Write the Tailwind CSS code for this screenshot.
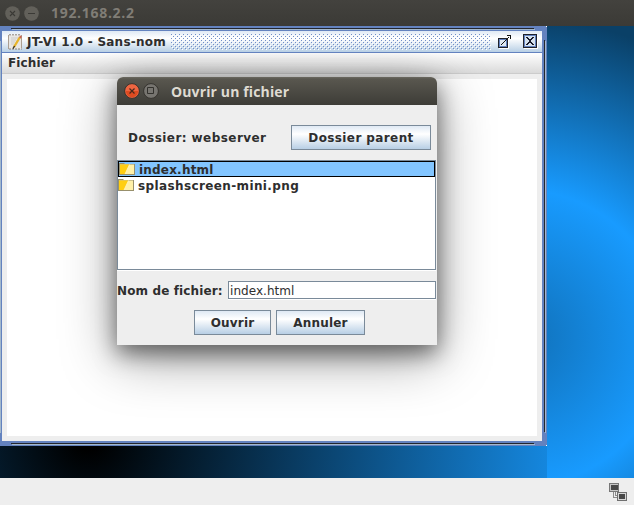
<!DOCTYPE html>
<html lang="fr">
<head>
<meta charset="utf-8">
<title>192.168.2.2</title>
<script src="https://cdn.jsdelivr.net/npm/@tailwindcss/browser@4"></script>
</head>
<body class="w-[634px] h-[505px] overflow-hidden flex flex-col bg-[#eeeeee] font-['DejaVu_Sans',sans-serif] text-[13px] leading-4 text-[#2e2e2e]">
<header class="h-[26px] shrink-0 flex items-center pl-[5px] bg-linear-to-b from-[#43423e] to-[#3b3a36]">
  <svg class="mr-1" width="15" height="15" viewBox="0 0 15 15"><circle cx="7.5" cy="7.5" r="7.3" fill="#62605a"/><path d="M5 5l5 5M10 5l-5 5" stroke="#3b3a36" stroke-width="1.1"/></svg>
  <svg width="15" height="15" viewBox="0 0 15 15"><circle cx="7.5" cy="7.5" r="7.3" fill="#62605a"/><path d="M4 7.5h7" stroke="#3b3a36"/></svg>
  <span class="ml-3 font-['Open_Sans',sans-serif] font-bold text-[14px] tracking-[0.7px] text-[#807d76]">192.168.2.2</span>
</header>
<main class="relative h-[452px] shrink-0 flex bg-[radial-gradient(circle_at_88px_412px,#000_0,#000_12px,#1588e0_465px)]">
  <section class="w-[547px] h-[420px] relative bg-[#6382bf] pt-[5px] pl-[2px] pr-[5px] pb-[5px]">
    <div class="absolute left-[11px] top-[2px] w-[523px] h-px bg-[#23262e] shadow-[1px_1px_0_#a3b8cc]"></div>
    <div class="absolute left-[11px] top-[417px] w-[523px] h-px bg-[#23262e] shadow-[1px_1px_0_#a3b8cc]"></div>
    <div class="absolute left-[544px] top-[14px] w-px h-[392px] bg-[#23262e] shadow-[1px_1px_0_#a3b8cc]"></div>
    <div class="absolute left-0 top-[15px] w-px h-[392px] bg-[#a3b8cc]"></div>
    <div class="absolute left-[546px] top-0 w-px h-px bg-white"></div>
    <div class="absolute left-[546px] top-[419px] w-px h-px bg-white"></div>
    <div class="h-[410px] flex flex-col bg-[#eeeeee] rounded-t-[1px]">
      <div class="h-[21px] shrink-0 flex items-start pl-[5px] bg-[linear-gradient(#dfe9f4,#ffffff_35%,#b8cfe5)]">
        <svg class="mt-[3px]" width="16" height="16" viewBox="0 0 16 16"><path d="M1 1h14v14H1z" fill="#e9e7e4"/><path d="M1.5 1v14M14.5 1v13" stroke="#ab9e91"/><path d="M2 .8h12M2 15h13" stroke="#8d8279" stroke-dasharray="2 1"/><path d="M4 4h7M4 6h5M4 8h4M4 10h3" stroke="#c3c1be" stroke-width=".7"/><path d="M13 3L7 13" stroke="#e7b52d" stroke-width="2.4"/><path d="M14 2l-1 2" stroke="#cf6551" stroke-width="2"/><path d="M7.6 12L6 14.7" stroke="#353027" stroke-width="1.3"/></svg>
        <span class="ml-[4px] mt-[3px] w-[144px] whitespace-nowrap font-bold text-[12px] tracking-[0.24px]">JT-VI 1.0 - Sans-nom</span>
        <svg class="mt-[3px]" width="320" height="16" shape-rendering="crispEdges"><defs><pattern id="bumps" width="4" height="4" patternUnits="userSpaceOnUse"><path d="M0 0h1v1H0zM2 2h1v1H2z" fill="#6f8ec8"/><path d="M1 1h1v1H1zM3 3h1v1H3z" fill="#fff"/></pattern></defs><rect width="320" height="16" fill="url(#bumps)"/></svg>
        <svg class="ml-[6px] mt-[3px]" width="14" height="16" viewBox="0 0 14 16" shape-rendering="crispEdges"><path d="M2 5h10v10H2z" fill="#fff"/><path d="M1.5 4.5h9v9h-9z" fill="#dfe9f3" stroke="#20232b"/><path d="M2.5 5.5h7v7h-7z" fill="none" stroke="#6382bf"/><path d="M4 10h1v1H4zM5 9h1v1H5zM6 8h1v1H6zM7 7h1v1H7zM8 6h1v1H8zM9 5h1v1H9zM10 4h1v1h-1zM11 3h1v1h-1zM10 1h4v4h-1V2h-3z" fill="#111"/></svg>
        <svg class="ml-[12px] mt-[3px]" width="15" height="15" viewBox="0 0 15 15" shape-rendering="crispEdges"><path d="M1 1h14v14H1z" fill="#fff"/><path d="M.5 .5h13v13H.5z" fill="#d5e2ef" stroke="#20232b"/><path d="M1.5 1.5h11v11h-11z" fill="none" stroke="#6382bf"/><path d="M3 3h2v1h1v1h2V4h1V3h2v1h-1v1H9v1H8v2h1v1h1v1h1v1H9v-1H8V9H6v1H5v1H3v-1h1V9h1V8h1V6H5V5H4V4H3z" fill="#17192a"/></svg>
      </div>
      <div class="h-px shrink-0 bg-[#6382bf]"></div>
      <!-- client area; clips the dialog's shadow -->
      <div class="relative flex-1 flex flex-col overflow-hidden">
        <nav class="h-[20px] shrink-0 pl-[6px] pt-[2px] bg-linear-to-b from-white to-[#dadada] font-bold text-[12px] tracking-[0.15px]">Fichier</nav>
        <div class="h-px shrink-0 bg-[#cccccc]"></div>
        <div class="flex-1 mt-[5px] mx-[5px] mb-[5px] bg-white"></div>
        <div class="absolute left-[115px] top-[24px] w-[320px] h-[268px] rounded-t-md shadow-[0_12px_55px_rgba(0,0,0,0.4),0_8px_22px_rgba(0,0,0,0.5)]"></div>
      </div>
    </div>
  </section>
  <div class="flex-1 bg-[radial-gradient(circle_at_-27px_312px,#1070b8_0,#189bff_148px,#0a4067_320px)]"></div>

  <section class="absolute left-[117px] top-[51px] w-[320px] h-[268px] flex flex-col bg-[#eeeeee] rounded-t-md overflow-hidden font-bold">
    <div class="h-[28px] shrink-0 flex items-center pl-[7px] bg-[linear-gradient(#6b6960_0,#59574f_2px,#3d3c37)]">
      <svg class="mr-[3px]" width="16" height="16" viewBox="0 0 16 16"><circle cx="8" cy="8" r="7.4" fill="#ee6541" stroke="#35332e"/><path d="M1.8 8a6.2 6.2 0 0 0 12.4 0z" fill="#df4b20"/><path d="M5.5 5.5l5 5M10.5 5.5l-5 5" stroke="#49291c" stroke-width="1.2"/></svg>
      <svg width="16" height="16" viewBox="0 0 16 16"><circle cx="8" cy="8" r="7.4" fill="#777570" stroke="#35332e"/><path d="M4.500 4.500h6v6h-6z" fill="none" stroke="#32312d"/></svg>
      <span class="ml-[12px] mt-px font-['Open_Sans',sans-serif] text-[14px] tracking-[0.13px] text-[#dfdbd2] whitespace-nowrap">Ouvrir un fichier</span>
    </div>
    <div class="h-[55px] shrink-0 flex items-center justify-between pl-[11px] pr-[6px] pt-[9px] text-[12px]">
      <span class="pt-[2px] tracking-[0.44px]">Dossier: webserver</span>
      <button class="w-[140px] h-[25px] pt-px border border-[#7a8a99] bg-[linear-gradient(#dfe9f4,#ffffff_35%,#b8cfe5)] tracking-[0.4px]">Dossier parent</button>
    </div>
    <ul class="h-[110px] shrink-0 mr-px border border-[#7a8a99] bg-white shadow-[0_1px_0_#fff] text-[12px]">
      <li class="h-[16px] flex items-center bg-[#82c5ff] outline outline-1 -outline-offset-1 outline-black tracking-[0.2px]">
        <svg class="ml-px mr-[4px]" width="16" height="14" viewBox="0 0 16 14"><path d="M0 1h5l1 1h10v11H0z" fill="#98906c"/><path d="M1 2.500h14v9.500H1z" fill="#fff0a8"/><path d="M1 2.500h9.500L6 12H1z" fill="#ffce12"/><path d="M10.500 2.500L6 12" stroke="#fff7d1" stroke-width=".7"/></svg><span class="pt-[2px]">index.html</span>
      </li>
      <li class="h-[16px] flex items-center tracking-[0.38px]">
        <svg class="mr-[4px]" width="16" height="14" viewBox="0 0 16 14"><path d="M0 1h5l1 1h10v11H0z" fill="#98906c"/><path d="M1 2.500h14v9.500H1z" fill="#fff0a8"/><path d="M1 2.500h9.500L6 12H1z" fill="#ffce12"/><path d="M10.500 2.500L6 12" stroke="#fff7d1" stroke-width=".7"/></svg><span class="pt-[2px]">splashscreen-mini.png</span>
      </li>
    </ul>
    <div class="mt-[11px] h-[18px] shrink-0 flex items-center pr-px text-[12px]">
      <span class="w-[111px] pt-[2px] whitespace-nowrap tracking-[0.12px]">Nom de fichier:</span>
      <div class="flex-1 h-[18px] pl-px pt-px leading-4 border border-[#7a8a99] bg-white shadow-[0_1px_0_#fff] font-normal tracking-[0.05px]">index.html</div>
    </div>
    <div class="mt-[11px] flex justify-center gap-[5px] pl-[5px] text-[12px] tracking-[0.2px]">
      <button class="w-[77px] h-[25px] border border-[#7a8a99] bg-[linear-gradient(#dfe9f4,#ffffff_35%,#b8cfe5)]">Ouvrir</button>
      <button class="w-[89px] h-[25px] border border-[#7a8a99] bg-[linear-gradient(#dfe9f4,#ffffff_35%,#b8cfe5)]">Annuler</button>
    </div>
  </section>
</main>
<footer class="flex-1 flex justify-end pr-[7px] pt-[4px]">
  <svg width="19" height="20" viewBox="0 0 19 20" shape-rendering="crispEdges"><path d="M5.5 10v5h5M7.5 10v3h3" fill="none" stroke="#8b8b8b"/><path d="M1.5 1.5h9v8h-9z" fill="#c6c6c6" stroke="#777"/><path d="M3 3h7v5H3z" fill="#484848"/><path d="M9.500 10.500h9v8h-9z" fill="#d6d6d6" stroke="#707070"/><path d="M11 12h6v5h-6z" fill="#484848"/></svg>
</footer>
</body>
</html>
